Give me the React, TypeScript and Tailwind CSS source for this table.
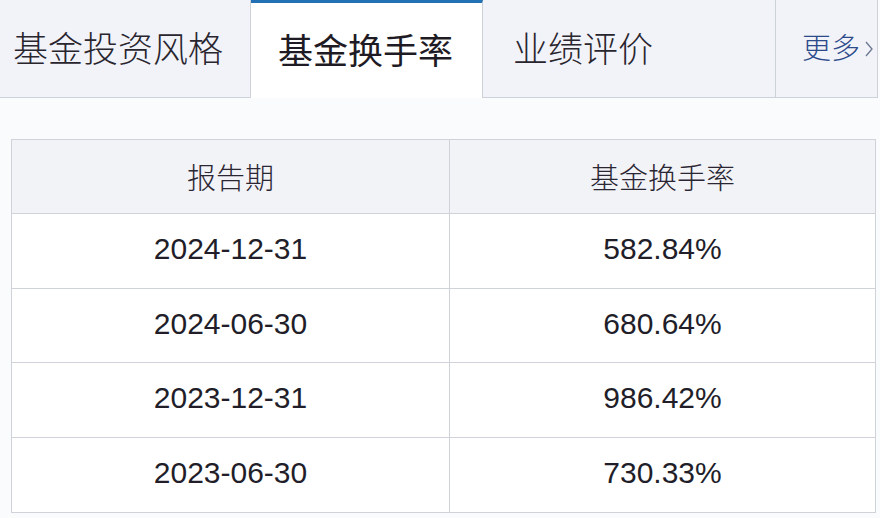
const rows = [
  { date: "2024-12-31", rate: "582.84%", h: "h-[75px]" },
  { date: "2024-06-30", rate: "680.64%", h: "h-[74px]" },
  { date: "2023-12-31", rate: "986.42%", h: "h-[75px]" },
  { date: "2023-06-30", rate: "730.33%", h: "h-[75px]" },
]

const cjk = "font-['Noto_Sans_CJK_SC','Noto_Sans',sans-serif]"
const num = "font-['Liberation_Sans',Arial,sans-serif]"

export default function App() {
  return (
    <div className={`w-[880px] h-[518px] bg-[#fafbfd] overflow-hidden ${cjk}`}>
      {/* Tabs */}
      <div className="flex h-[98px]">
        <div className="w-[251px] flex items-center pl-[13px] pb-[3px] bg-[#f1f3f8] border-r border-b border-[#cdd1d8] text-[35px] font-light text-[#29252f]">
          基金投资风格
        </div>
        <div className="w-[232px] flex items-center pl-[27px] pb-[3px] bg-white border-t-[3px] border-t-[#2470b5] border-r border-r-[#cdd1d8] text-[35px] font-normal text-[#1f1b24]">
          基金换手率
        </div>
        <div className="w-[293px] flex items-center pl-[30px] pb-[3px] bg-[#f1f3f8] border-r border-b border-[#cdd1d8] text-[35px] font-light text-[#29252f]">
          业绩评价
        </div>
        <div className="w-[102px] flex items-center pl-[26px] pb-[3px] bg-[#f1f3f8] border-r border-b border-[#cdd1d8] text-[29px] font-light text-[#2c4a8a]">
          <span>更多</span>
          <svg width="10" height="20" viewBox="0 0 10 20" className="ml-[4px] mt-[4px]">
            <path d="M2 3 L8 10 L2 17" fill="none" stroke="#6b7790" strokeWidth="1.3" />
          </svg>
        </div>
      </div>

      {/* Table */}
      <div className="mt-[41px] ml-[11px] w-[865px] border border-[#cfd2d8] bg-white">
        <div className="flex h-[73px] bg-[#f2f3f6] text-[29px] font-light text-[#2b2633]">
          <div className="w-[438px] flex items-center justify-center border-r border-[#cfd2d8]">报告期</div>
          <div className="flex-1 flex items-center justify-center">基金换手率</div>
        </div>
        {rows.map((r) => (
          <div key={r.date} className={`flex ${r.h} border-t border-[#cfd2d8] text-[30px] text-[#221e29] ${num}`}>
            <div className="w-[438px] flex items-center justify-center pb-[5px] border-r border-[#cfd2d8]">{r.date}</div>
            <div className="flex-1 flex items-center justify-center pb-[5px]">{r.rate}</div>
          </div>
        ))}
      </div>
    </div>
  )
}
